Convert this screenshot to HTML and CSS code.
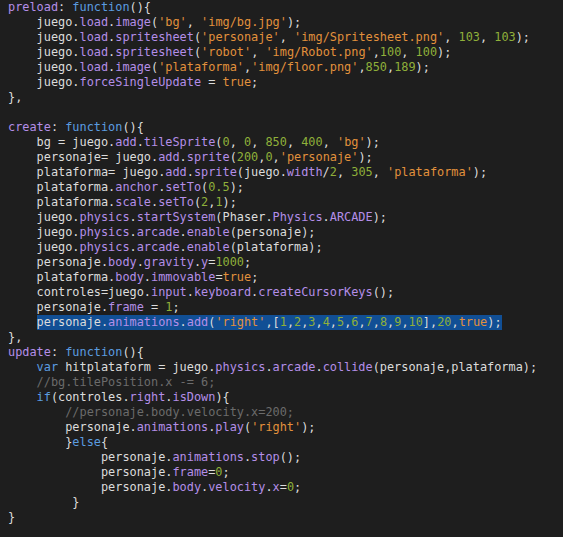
FILE: index.html
```html
<!DOCTYPE html>
<html lang="en">
<head>
<meta charset="utf-8">
<title>Code</title>
<link rel="stylesheet" href="styles.css">
</head>
<body>
<pre class="code"><span class="p">preload</span>: <span class="k">function</span>(){
    juego.<span class="p">load</span>.<span class="p">image</span>(<span class="s">'bg'</span>, <span class="s">'img/bg.jpg'</span>);
    juego.<span class="p">load</span>.<span class="p">spritesheet</span>(<span class="s">'personaje'</span>, <span class="s">'img/Spritesheet.png'</span>, <span class="n">103</span>, <span class="n">103</span>);
    juego.<span class="p">load</span>.<span class="p">spritesheet</span>(<span class="s">'robot'</span>, <span class="s">'img/Robot.png'</span>,<span class="n">100</span>, <span class="n">100</span>);
    juego.<span class="p">load</span>.<span class="p">image</span>(<span class="s">'plataforma'</span>,<span class="s">'img/floor.png'</span>,<span class="n">850</span>,<span class="n">189</span>);
    juego.<span class="p">forceSingleUpdate</span> = <span class="s">true</span>;
},

<span class="p">create</span>: <span class="k">function</span>(){
    bg = juego.<span class="p">add</span>.<span class="p">tileSprite</span>(<span class="n">0</span>, <span class="n">0</span>, <span class="n">850</span>, <span class="n">400</span>, <span class="s">'bg'</span>);
    personaje= juego.<span class="p">add</span>.<span class="p">sprite</span>(<span class="n">200</span>,<span class="n">0</span>,<span class="s">'personaje'</span>);
    plataforma= juego.<span class="p">add</span>.<span class="p">sprite</span>(juego.<span class="p">width</span>/<span class="n">2</span>, <span class="n">305</span>, <span class="s">'plataforma'</span>);
    plataforma.<span class="p">anchor</span>.<span class="p">setTo</span>(<span class="n">0.5</span>);
    plataforma.<span class="p">scale</span>.<span class="p">setTo</span>(<span class="n">2</span>,<span class="n">1</span>);
    juego.<span class="p">physics</span>.<span class="p">startSystem</span>(Phaser.<span class="p">Physics</span>.<span class="p">ARCADE</span>);
    juego.<span class="p">physics</span>.<span class="p">arcade</span>.<span class="p">enable</span>(personaje);
    juego.<span class="p">physics</span>.<span class="p">arcade</span>.<span class="p">enable</span>(plataforma);
    personaje.<span class="p">body</span>.<span class="p">gravity</span>.<span class="p">y</span>=<span class="n">1000</span>;
    plataforma.<span class="p">body</span>.<span class="p">immovable</span>=<span class="s">true</span>;
    controles=juego.<span class="p">input</span>.<span class="p">keyboard</span>.<span class="p">createCursorKeys</span>();
    personaje.<span class="p">frame</span> = <span class="n">1</span>;
    <span class="sel">personaje.<span class="p">animations</span>.<span class="p">add</span>(<span class="s">'right'</span>,[<span class="n">1</span>,<span class="n">2</span>,<span class="n">3</span>,<span class="n">4</span>,<span class="n">5</span>,<span class="n">6</span>,<span class="n">7</span>,<span class="n">8</span>,<span class="n">9</span>,<span class="n">10</span>],<span class="n">20</span>,<span class="s">true</span>);</span>
},
<span class="p">update</span>: <span class="k">function</span>(){
    <span class="k">var</span> hitplataform = juego.<span class="p">physics</span>.<span class="p">arcade</span>.<span class="p">collide</span>(personaje,plataforma);
    <span class="c">//bg.tilePosition.x -= 6;</span>
    <span class="k">if</span>(controles.<span class="p">right</span>.<span class="p">isDown</span>){
        <span class="c">//personaje.body.velocity.x=200;</span>
        personaje.<span class="p">animations</span>.<span class="p">play</span>(<span class="s">'right'</span>);
        }<span class="k">else</span>{
             personaje.<span class="p">animations</span>.<span class="p">stop</span>();
             personaje.<span class="p">frame</span>=<span class="n">0</span>;
             personaje.<span class="p">body</span>.<span class="p">velocity</span>.<span class="p">x</span>=<span class="n">0</span>;
         }
}</pre>
</body>
</html>
```
FILE: styles.css
```css
html, body {
  margin: 0;
  padding: 0;
  background: #1e1e1e;
}

.code {
  margin: 0;
  padding: 0 8px;
  font-family: "DejaVu Sans Mono", "Liberation Mono", monospace;
  font-size: 11.88px;
  line-height: 15px;
  color: #dcdcdc;
  white-space: pre;
}

.p { color: #b48ee8; }
.k { color: #5b9ce0; }
.s { color: #e2913c; }
.n { color: #8fb03a; }
.c { color: #6b6b6b; }

.sel {
  background: #114f95;
  display: inline-block;
  height: 15px;
}
```
